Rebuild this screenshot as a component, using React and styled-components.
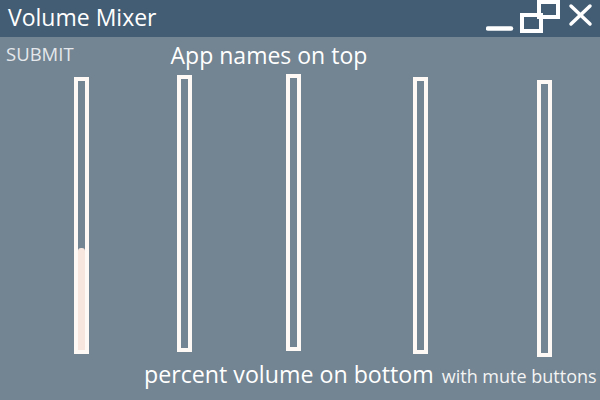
import React from 'react';
import styled, { createGlobalStyle } from 'styled-components';

const GlobalStyle = createGlobalStyle`
  html, body {
    margin: 0;
    padding: 0;
    background: #738492;
  }
  body {
    font-family: "Open Sans", "Noto Sans", sans-serif;
  }
`

const Window = styled.div`
  width: 600px;
  height: 400px;
  background: #738492;
  color: #ffffff;
  overflow: hidden;
  display: flex;
  flex-direction: column;
`

const TitleBar = styled.div`
  height: 37px;
  background: #435d74;
  display: flex;
  align-items: center;
  justify-content: space-between;
  padding-left: 8px;
  box-sizing: border-box;
`

const Title = styled.span`
  font-size: 23px;
  line-height: 37px;
  margin-top: -2px;
  color: #ffffff;
`

const Controls = styled.svg`
  display: block;
`

const Header = styled.div`
  display: flex;
  align-items: center;
  height: 36px;
  padding-left: 6px;
`

const Submit = styled.span`
  font-size: 18.5px;
  color: #e4e8ec;
  margin-top: -4px;
`

const Heading = styled.span`
  font-size: 23px;
  margin-left: 97px;
`

const Sliders = styled.div`
  display: flex;
  align-items: flex-start;
  height: 284px;
  padding-left: 74px;
`

const Track = styled.div`
  position: relative;
  width: 15px;
  height: ${p => p.$height}px;
  margin-left: ${p => p.$gap}px;
  margin-top: ${p => p.$top}px;
  border: 4px solid #fff9f5;
  box-sizing: border-box;
`

const Fill = styled.div`
  position: absolute;
  left: 0;
  right: 0;
  bottom: 0;
  background: #f6e6de;
  border-radius: 3px 3px 0 0;
`

const Footer = styled.div`
  display: flex;
  align-items: baseline;
  padding-left: 144px;
  margin-top: 1px;
  white-space: nowrap;
`

const Caption = styled.span`
  font-size: 23.2px;
`

const Note = styled.span`
  font-size: 18px;
  margin-left: 8px;
  color: #f4f4f4;
`

const sliders = [
  { gap: 0, top: 4, height: 277, level: 38 },
  { gap: 88, top: 2, height: 277, level: 0 },
  { gap: 94, top: 1, height: 277, level: 0 },
  { gap: 112, top: 4, height: 277, level: 0 },
  { gap: 109, top: 7, height: 277, level: 0 },
]

const App = () => (
  <>
    <GlobalStyle />
    <Window>
      <TitleBar>
        <Title>Volume Mixer</Title>
        <Controls width="114" height="37" viewBox="0 0 114 37">
          <line x1="2" y1="28.5" x2="25" y2="28.5" stroke="#fff" strokeWidth="4.5" strokeLinecap="round" />
          <rect x="53" y="2" width="19" height="15" fill="none" stroke="#fff" strokeWidth="4" />
          <rect x="36" y="15" width="19" height="16" fill="none" stroke="#fff" strokeWidth="4" />
          <line x1="85" y1="6" x2="104" y2="24" stroke="#fff" strokeWidth="3.5" strokeLinecap="round" />
          <line x1="104" y1="6" x2="85" y2="24" stroke="#fff" strokeWidth="3.5" strokeLinecap="round" />
        </Controls>
      </TitleBar>
      <Header>
        <Submit>SUBMIT</Submit>
        <Heading>App names on top</Heading>
      </Header>
      <Sliders>
        {sliders.map((s, i) => (
          <Track key={i} $gap={s.gap} $top={s.top} $height={s.height}>
            {s.level > 0 && <Fill style={{ height: `${s.level}%` }} />}
          </Track>
        ))}
      </Sliders>
      <Footer>
        <Caption>percent volume on bottom</Caption>
        <Note>with mute buttons</Note>
      </Footer>
    </Window>
  </>
)

export default App;
